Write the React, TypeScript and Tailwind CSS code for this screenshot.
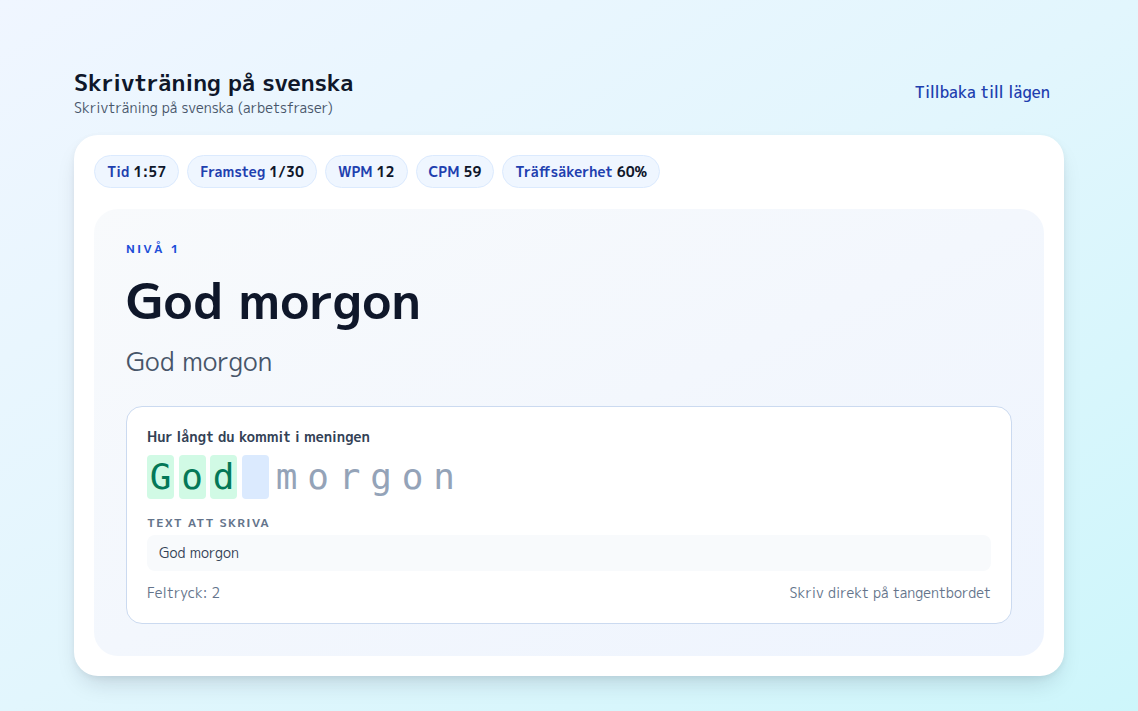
import React from "react";

const stats = [
  { label: "Tid", value: "1:57" },
  { label: "Framsteg", value: "1/30" },
  { label: "WPM", value: "12" },
  { label: "CPM", value: "59" },
  { label: "Träffsäkerhet", value: "60%" },
];

const chars = "God morgon".split("");
const typed = 3;

export default function App() {
  return (
    <div
      className="min-h-[711px] w-full bg-gradient-to-br from-[#f0f6ff] via-[#e2f6fd] to-[#cdf6fb] pt-[66px] pb-10"
      style={{ fontFamily: '"M PLUS 1p", "Noto Sans", sans-serif' }}
    >
      <div className="mx-auto w-[990px]">
        <div className="flex items-start justify-between">
          <div>
            <h1 className="text-[23.2px] leading-8 font-bold text-[#0f172a]">Skrivträning på svenska</h1>
            <p className="text-sm leading-5 text-[#475569]">Skrivträning på svenska (arbetsfraser)</p>
          </div>
          <a className="mt-[14px] mr-[14px] text-base font-medium text-[#1e40af]">Tillbaka till lägen</a>
        </div>

        <div className="mt-[17px] rounded-[24px] bg-white p-5 shadow-[0_12px_24px_-8px_rgba(15,23,42,0.18),0_2px_6px_rgba(15,23,42,0.05)]">
          <div className="flex gap-2">
            {stats.map((s) => (
              <div
                key={s.label}
                className="flex h-[33px] items-center rounded-full border border-[#dbeafe] bg-[#eff6ff] px-3 text-sm font-bold"
              >
                <span className="text-[#1e40af]">{s.label}</span>
                <span className="ml-[4px] text-[#0f172a]">{s.value}</span>
              </div>
            ))}
          </div>

          <div className="mt-[21px] rounded-[24px] bg-gradient-to-br from-[#f8fafc] to-[#eef4fe] p-8">
            <div className="text-xs leading-4 font-bold tracking-[0.18em] text-[#1d4ed8]">NIVÅ 1</div>
            <h2 className="mt-5 text-[49.7px] leading-[48px] font-bold text-[#0f172a]">God morgon</h2>
            <p className="mt-5 text-[25.6px] leading-8 text-[#475569]">God morgon</p>

            <div className="mt-[29px] rounded-2xl border border-[#cbdaf0] bg-white p-5">
              <div className="text-sm leading-5 font-bold text-[#334155]">Hur långt du kommit i meningen</div>
              <div
                className="mt-2 flex gap-[4.5px]"
                style={{ fontFamily: '"DejaVu Sans Mono", "Liberation Mono", monospace' }}
              >
                {chars.map((c, i) => {
                  let cls = "text-[#94a3b8]";
                  if (i < typed) cls = "bg-[#d1fae5] text-[#047857]";
                  else if (i === typed) cls = "bg-[#dbeafe] text-[#94a3b8]";
                  return (
                    <span
                      key={i}
                      className={`flex h-[44px] w-[27px] items-center justify-center rounded-[4px] text-[36px] leading-none font-light ${cls}`}
                    >
                      {c === " " ? "\u00a0" : c}
                    </span>
                  );
                })}
              </div>
              <div className="mt-4 text-xs leading-4 font-bold tracking-[0.1em] text-[#64748b]">TEXT ATT SKRIVA</div>
              <div className="mt-1 rounded-lg bg-[#f8fafc] px-3 py-2 text-sm leading-5 text-[#334155]">God morgon</div>
              <div className="mt-3 flex justify-between text-sm leading-5 text-[#64748b]">
                <span>Feltryck: 2</span>
                <span>Skriv direkt på tangentbordet</span>
              </div>
            </div>
          </div>
        </div>
      </div>
    </div>
  );
}
